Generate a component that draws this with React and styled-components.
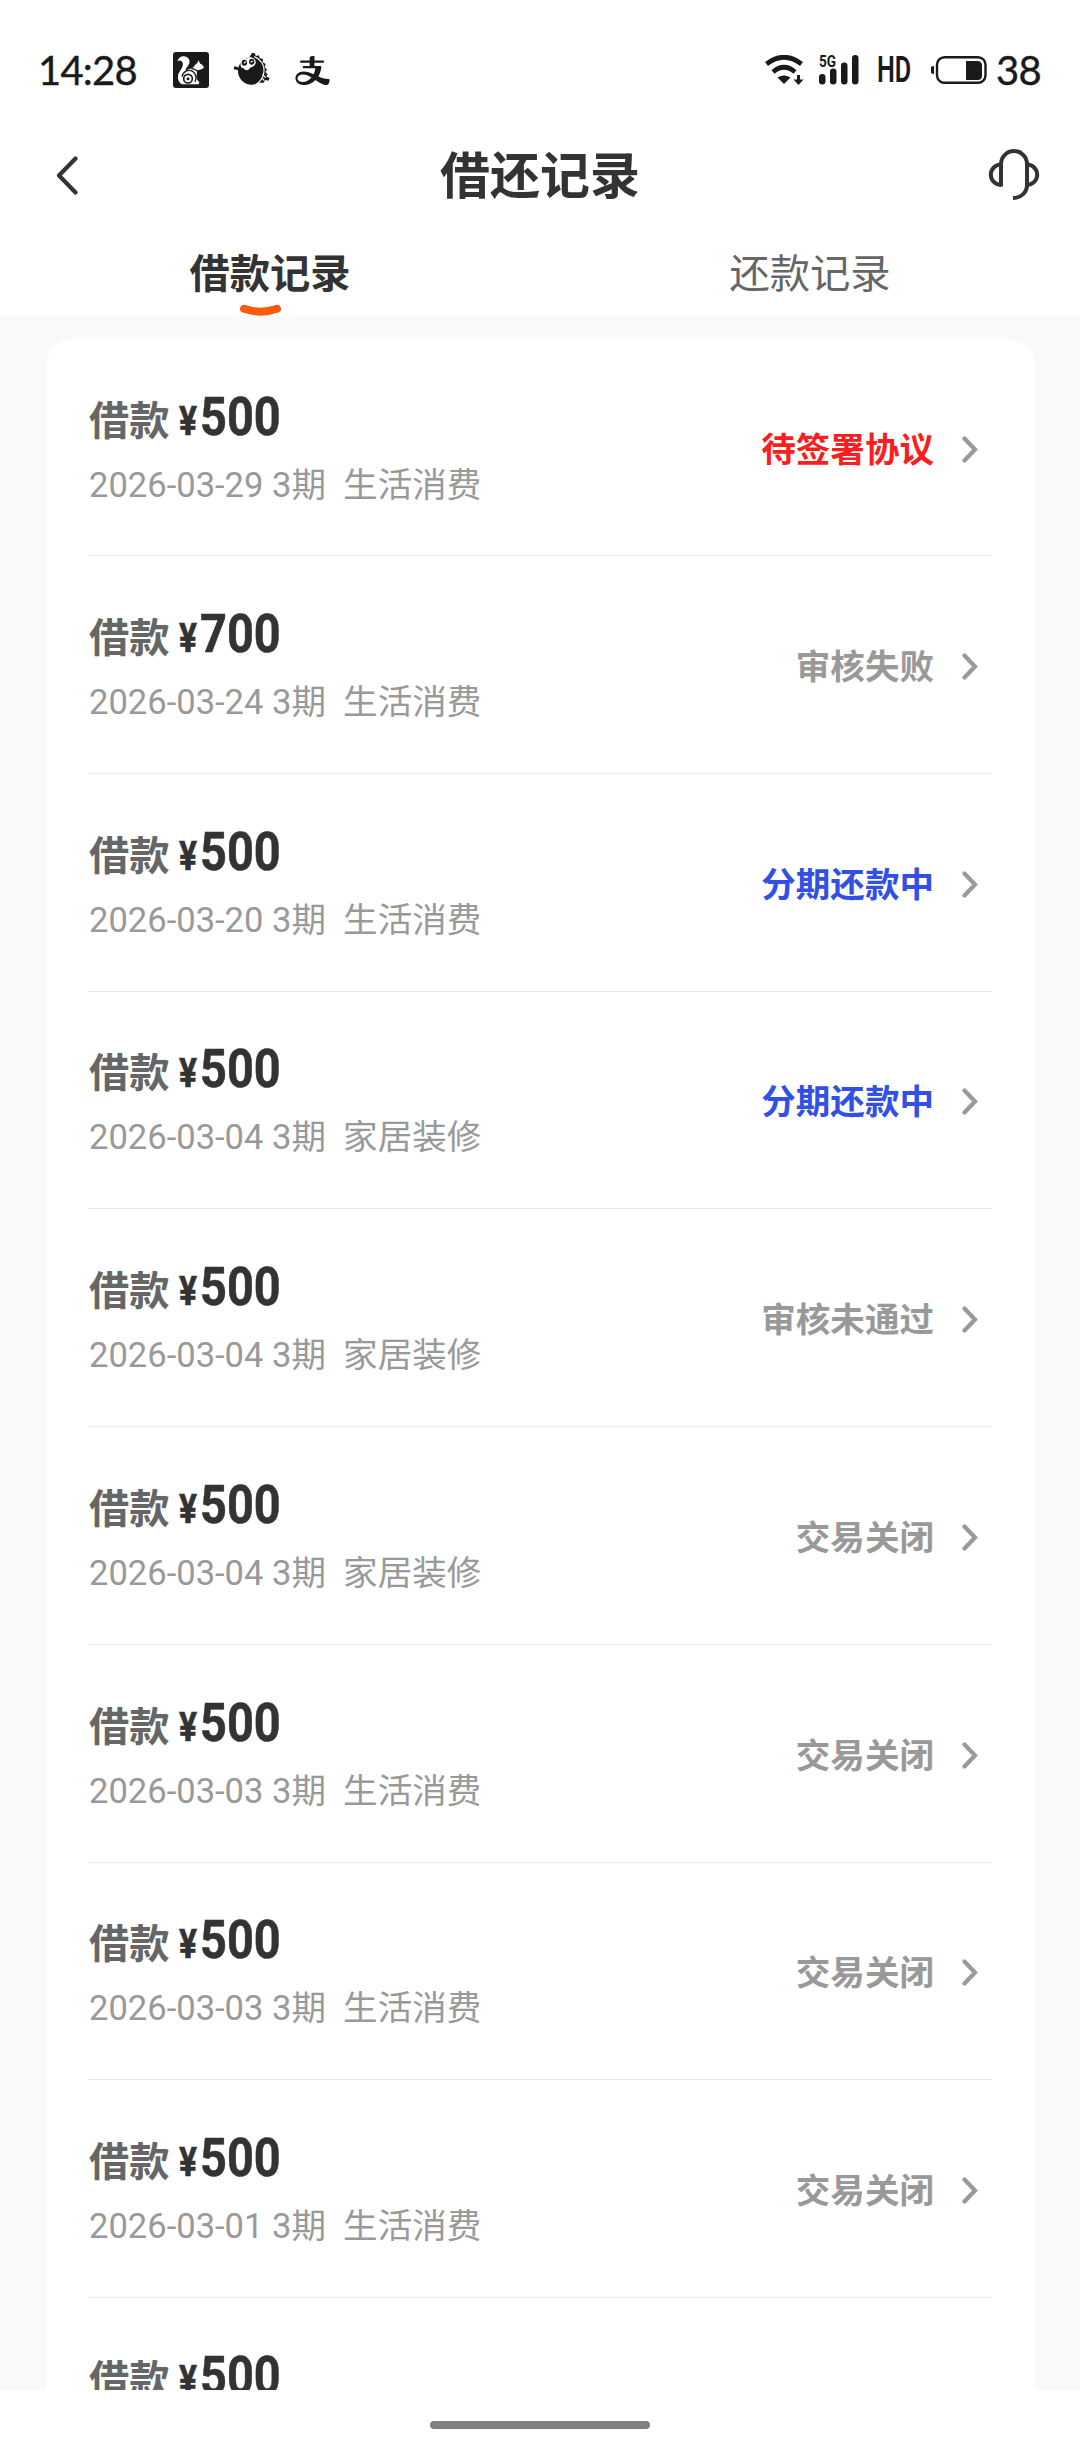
import React from "react";
import styled, { createGlobalStyle } from "styled-components";
import { AiOutlineAlipay } from "react-icons/ai";

const GlobalStyle = createGlobalStyle`
  *, *::before, *::after { box-sizing: border-box; }
  body {
    margin: 0;
    background: #fff;
    font-family: Roboto, "Noto Sans CJK SC", sans-serif;
  }
  svg { display: block; flex: none; }
`;

const Screen = styled.div`
  width: 1080px;
  height: 2460px;
  display: flex;
  flex-direction: column;
  overflow: hidden;
  background: #fff;
  color: #333;
`;

const StatusBar = styled.div`
  height: 130px;
  flex: none;
  padding: 10px 41px 0 38px;
  display: flex;
  align-items: center;
  justify-content: space-between;
  color: #1a1a1a;
`;

const StatusGroup = styled.div`
  display: flex;
  align-items: center;
`;

const Clock = styled.span`
  width: 135px;
  font: 400 40px/1 Lato, sans-serif;
  letter-spacing: -0.8px;
  white-space: nowrap;
  -webkit-text-stroke: 0.4px #1a1a1a;
`;

const AppIcons = styled.div`
  display: flex;
  align-items: center;
  gap: 24px;
`;

const AlipayIcon = styled(AiOutlineAlipay)`
  width: 39px;
  height: 39px;
  margin-left: -1px;
`;

const Network = styled.div`
  display: flex;
  flex-direction: column;
  position: relative;
  margin-left: 15px;
`;

const NetworkLabel = styled.span`
  position: absolute;
  left: 0;
  top: 0;
  font: 700 17px/12px Roboto, sans-serif;
  transform: scaleX(0.8);
  transform-origin: left;
`;

const HdLabel = styled.span`
  width: 33px;
  margin: 0 21px 0 18px;
  font: 600 36px/1 Roboto, sans-serif;
  transform: scaleX(0.7);
  transform-origin: left;
`;

const BatteryLevel = styled.span`
  width: 43px;
  margin-left: 9px;
  font: 400 40px/1 Lato, sans-serif;
  letter-spacing: -0.8px;
  -webkit-text-stroke: 0.4px #1a1a1a;
`;

const NavBar = styled.header`
  height: 92px;
  flex: none;
  padding: 0 39px 0 55px;
  display: grid;
  grid-template-columns: 54px 1fr 54px;
  align-items: center;
`;

const Title = styled.h1`
  margin: 0;
  padding: 1px 16px 0 0;
  text-align: center;
  font-size: 50px;
  line-height: 60px;
  font-weight: 700;
`;

const Tabs = styled.nav`
  height: 94px;
  flex: none;
  display: grid;
  grid-template-columns: 1fr 1fr;
`;

const Tab = styled.div`
  position: relative;
  padding-top: 24px;
  text-align: center;
  font-size: 40.3px;
  line-height: 58px;
  font-weight: ${(p) => (p.$active ? 700 : 400)};
  color: ${(p) => (p.$active ? "#333" : "#666")};
`;

const TabMark = styled.svg`
  position: absolute;
  left: 239px;
  bottom: 0;
`;

const Content = styled.main`
  height: 2074px;
  flex: none;
  padding: 23px 45px 0 46px;
  overflow: hidden;
  background: #f9f9f9;
`;

const Card = styled.section`
  padding: 0 43px 0 42px;
  background: #fff;
  border-radius: 26px;
`;

const Record = styled.article`
  height: 217.75px;
  display: flex;
  align-items: center;
  justify-content: space-between;
  border-bottom: 1px solid #ebebeb;

  &:first-child {
    height: 217px;
  }
`;

const Summary = styled.div`
  display: flex;
  flex-direction: column;
  gap: 14px;
  padding: 3px 0 0 1px;
`;

const AmountLine = styled.div`
  display: flex;
  align-items: baseline;
  height: 58px;
  line-height: 58px;
  color: #333;
  font-weight: 700;
`;

const Label = styled.span`
  width: 90px;
  font-size: 40.3px;
  color: #666;
`;

const Currency = styled.span`
  width: 20.5px;
  font-size: 40px;
  transform: scaleX(0.84);
  transform-origin: left;
  -webkit-text-stroke: 0.6px #333;
`;

const Amount = styled.span`
  font-size: 53px;
  transform: scaleX(0.885);
  transform-origin: left;
  -webkit-text-stroke: 0.5px #333;
`;

const Meta = styled.div`
  font-size: 34.56px;
  line-height: 50px;
  color: #999;
  white-space: pre;
`;

const Action = styled.div`
  display: flex;
  align-items: center;
  padding: 5px 14px 0 0;
  gap: 26px;
`;

const State = styled.span`
  font-size: 34.56px;
  line-height: 50px;
  font-weight: 700;
  color: ${(p) => ({ alert: "#fa1e1e", active: "#324fe6", muted: "#999" })[p.$tone]};
`;

const HomeArea = styled.footer`
  flex: 1;
  display: flex;
  justify-content: center;
  padding-top: 31px;
`;

const HomeBar = styled.div`
  width: 220px;
  height: 8px;
  border-radius: 4px;
  background: #808080;
`;

function SquirrelIcon() {
  return (
    <svg width="36" height="36" viewBox="0 0 108 108">
      <rect width="108" height="108" rx="9" fill="#1a1a1a" />
      <path
        d="M13 28C17 14 30 9 41 15C54 23 50 36 43 44C37 51 36 54 40 56C46 49 54 51 60 47C65 42 67 36 73 33L76 25L82 35C90 39 95 45 91 49C84 55 76 53 71 58C74 68 67 72 73 84L79 91L77 97H28C13 91 12 71 19 60C26 49 32 40 29 32C26 25 19 24 13 28Z"
        fill="#fff"
      />
      <path d="M27 74C30 58 46 51 59 58C70 65 71 79 66 90M55 50C68 50 76 61 93 64" fill="none" stroke="#1a1a1a" strokeWidth="4" />
      <circle cx="45" cy="80" r="13" fill="#fff" stroke="#1a1a1a" strokeWidth="5" />
      <circle cx="45" cy="80" r="4.500" fill="#1a1a1a" />
    </svg>
  );
}

function DragonIcon() {
  return (
    <svg width="37" height="36" viewBox="0 0 111 108">
      <circle cx="56" cy="57" r="41" fill="#1a1a1a" />
      <path
        d="M50 14L57 3L66 4L68 12L78 10L80 19L90 21L89 31L98 36L95 45L102 53L97 60L104 67L100 73L110 79L106 86L97 84L92 92L80 92L60 50ZM20 62L14 54L2 52L4 43L14 45L22 52Z"
        fill="#1a1a1a"
      />
      <path d="M64 14C83 21 95 39 93 58C92 76 82 89 70 97M88 67L98 77M86 77L94 86" fill="none" stroke="#fff" strokeWidth="3.500" />
      <path d="M23 40C20 26 30 16 41 20C52 10 71 20 68 34C65 44 55 46 51 47C48 56 36 57 32 49C26 49 23 46 23 40Z" fill="#fff" />
      <ellipse cx="34" cy="32" rx="8" ry="9" fill="#1a1a1a" />
      <ellipse cx="56" cy="29" rx="8" ry="9" fill="#1a1a1a" />
      <path d="M33 34L38 28M53 31L59 27" stroke="#fff" strokeWidth="3.500" fill="none" />
    </svg>
  );
}

function WifiIcon() {
  return (
    <svg width="39" height="30" viewBox="0 0 39 30" fill="none" stroke="#1a1a1a">
      <path d="M1.5 9Q19 -4.500 36.500 9" strokeWidth="4.800" />
      <path d="M8 17Q19 7.500 30 17" strokeWidth="4.800" />
      <path d="M12.500 22.500Q19 18.500 25.500 22.500L19 29Z" fill="#1a1a1a" stroke="none" />
      <path d="M33.500 20V26" strokeWidth="3" />
      <path d="M28.500 24.500H38.500L33.500 30Z" fill="#1a1a1a" stroke="none" />
    </svg>
  );
}

function SignalBars() {
  return (
    <svg width="40" height="30" viewBox="0 0 40 30" fill="#1a1a1a">
      <rect x="0" y="19" width="6.500" height="10.500" rx="3.200" />
      <rect x="11" y="13.500" width="6.500" height="16" rx="3.200" />
      <rect x="22" y="7.500" width="6.500" height="22" rx="3.200" />
      <rect x="33" y="0" width="6.500" height="29.500" rx="3.200" />
    </svg>
  );
}

function BatteryIcon() {
  return (
    <svg width="56" height="28" viewBox="0 0 56 28">
      <path d="M3 10V18A4 4 0 0 1 3 10Z" fill="#1a1a1a" />
      <rect x="6" y="1.200" width="48.500" height="25.600" rx="7.500" fill="none" stroke="#1a1a1a" strokeWidth="2.400" />
      <path d="M35 5H46.500Q51 5 51 9.500V19.500Q51 24 46.500 24H35Z" fill="#1a1a1a" />
    </svg>
  );
}

function BackIcon() {
  return (
    <svg width="24" height="40" viewBox="0 0 24 40" fill="none" stroke="#333" strokeWidth="4.200" strokeLinecap="round" strokeLinejoin="round">
      <path d="M20.500 2.500L4 19.500L20.500 36.500" />
    </svg>
  );
}

function HeadsetIcon() {
  return (
    <svg width="54" height="54" viewBox="0 0 54 54" fill="none" stroke="#333" strokeWidth="4">
      <path d="M14 37.500V15A13 13 0 0 1 40 15V36C40 43 34.500 49 26 49" />
      <path d="M14 15.500A10.200 10.200 0 0 0 14 35.900M40 15.500A10.200 10.200 0 0 1 40 35.900" />
    </svg>
  );
}

function Chevron() {
  return (
    <svg width="18" height="28" viewBox="0 0 18 28" fill="none" stroke="#999" strokeWidth="4.200" strokeLinecap="round">
      <path d="M4.500 2.500L15 13.500L4.500 24.500" />
    </svg>
  );
}

const records = [
  { amount: "500", date: "2026-03-29", use: "生活消费", state: "待签署协议", tone: "alert" },
  { amount: "700", date: "2026-03-24", use: "生活消费", state: "审核失败", tone: "muted" },
  { amount: "500", date: "2026-03-20", use: "生活消费", state: "分期还款中", tone: "active" },
  { amount: "500", date: "2026-03-04", use: "家居装修", state: "分期还款中", tone: "active" },
  { amount: "500", date: "2026-03-04", use: "家居装修", state: "审核未通过", tone: "muted" },
  { amount: "500", date: "2026-03-04", use: "家居装修", state: "交易关闭", tone: "muted" },
  { amount: "500", date: "2026-03-03", use: "生活消费", state: "交易关闭", tone: "muted" },
  { amount: "500", date: "2026-03-03", use: "生活消费", state: "交易关闭", tone: "muted" },
  { amount: "500", date: "2026-03-01", use: "生活消费", state: "交易关闭", tone: "muted" },
  { amount: "500" },
];

export default function App() {
  return (
    <Screen>
      <GlobalStyle />
      <StatusBar>
        <StatusGroup>
          <Clock>14:28</Clock>
          <AppIcons>
            <SquirrelIcon />
            <DragonIcon />
            <AlipayIcon />
          </AppIcons>
        </StatusGroup>
        <StatusGroup>
          <WifiIcon />
          <Network>
            <NetworkLabel>5G</NetworkLabel>
            <SignalBars />
          </Network>
          <HdLabel>HD</HdLabel>
          <BatteryIcon />
          <BatteryLevel>38</BatteryLevel>
        </StatusGroup>
      </StatusBar>
      <NavBar>
        <BackIcon />
        <Title>借还记录</Title>
        <HeadsetIcon />
      </NavBar>
      <Tabs>
        <Tab $active>
          借款记录
          <TabMark width="43" height="12" viewBox="0 0 43 12" fill="none" stroke="#ff5a0a" strokeWidth="8" strokeLinecap="round">
            <path d="M5 4.800Q21.500 10.500 38 4.800" />
          </TabMark>
        </Tab>
        <Tab>还款记录</Tab>
      </Tabs>
      <Content>
        <Card>
          {records.map((r, i) => (
            <Record key={i}>
              <Summary>
                <AmountLine>
                  <Label>借款</Label>
                  <Currency>¥</Currency>
                  <Amount>{r.amount}</Amount>
                </AmountLine>
                <Meta>{r.date ? `${r.date} 3期  ${r.use}` : " "}</Meta>
              </Summary>
              {r.state && (
                <Action>
                  <State $tone={r.tone}>{r.state}</State>
                  <Chevron />
                </Action>
              )}
            </Record>
          ))}
        </Card>
      </Content>
      <HomeArea>
        <HomeBar />
      </HomeArea>
    </Screen>
  );
}
